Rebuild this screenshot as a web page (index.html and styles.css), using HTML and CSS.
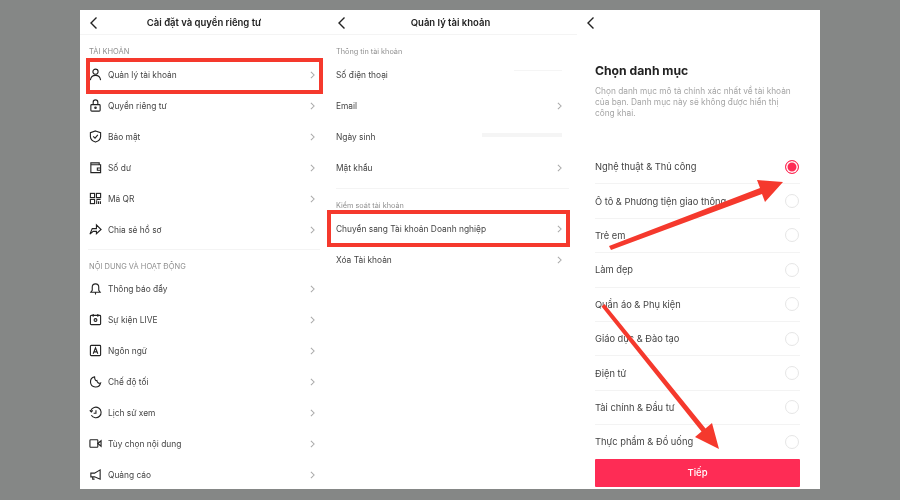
FILE: index.html
```html
<!DOCTYPE html>
<html lang="vi">
<head>
    <meta charset="UTF-8">
    <meta name="viewport" content="width=device-width, initial-scale=1.0">
    <title>Chọn danh mục</title>
    <link rel="stylesheet" href="styles.css">
</head>
<body>
    <svg width="0" height="0" class="defs">
        <symbol id="back" viewBox="0 0 10 14"><path d="M7.5 1.5 2 7l5.500 5.500" fill="none" stroke="#222" stroke-width="1.400"/></symbol>
        <symbol id="next" viewBox="0 0 6 10"><path d="M1 1l4 4-4 4" fill="none" stroke="#aaa" stroke-width="1.300"/></symbol>
    </svg>

    <div class="sheet">
        <div class="column first">
            <div class="top-bar">
                <svg class="back"><use href="#back"/></svg>
                <h1>Cài đặt và quyền riêng tư</h1>
            </div>
            <p class="section-label caps">TÀI KHOẢN</p>
            <div class="row">
                <svg class="icon" viewBox="0 0 14 14"><circle cx="7" cy="4" r="2.800"/><path d="M1.500 13c.5-3.500 2.500-5 5.500-5s5 1.500 5.500 5"/></svg>
                <span>Quản lý tài khoản</span>
                <svg class="chevron"><use href="#next"/></svg>
            </div>
            <div class="row">
                <svg class="icon" viewBox="0 0 14 14"><rect x="2" y="6" width="10" height="7" rx="1"/><path d="M4.500 6V3.500a2.500 2.500 0 0 1 5 0V6"/><circle cx="7" cy="9.500" r=".8"/></svg>
                <span>Quyền riêng tư</span>
                <svg class="chevron"><use href="#next"/></svg>
            </div>
            <div class="row">
                <svg class="icon" viewBox="0 0 14 14"><path d="M7 1l5.500 1.800V7c0 3-2.500 5-5.500 6C4 12 1.500 10 1.500 7V2.800z"/><path d="M4.500 6.800 6.500 8.800 9.500 5.300"/></svg>
                <span>Bảo mật</span>
                <svg class="chevron"><use href="#next"/></svg>
            </div>
            <div class="row">
                <svg class="icon" viewBox="0 0 14 14"><path d="M11 4V2H2v10.500h10.500V4H2"/><path d="M12.500 7.500H9v2.500h3.500"/></svg>
                <span>Số dư</span>
                <svg class="chevron"><use href="#next"/></svg>
            </div>
            <div class="row">
                <svg class="icon" viewBox="0 0 14 14"><rect x="1.500" y="1.500" width="4.500" height="4.500"/><rect x="8" y="1.500" width="4.500" height="4.500"/><rect x="1.500" y="8" width="4.500" height="4.500"/><path d="M8 8h4.500M8.300 9v4M10.300 10v3M12.300 10v3"/></svg>
                <span>Mã QR</span>
                <svg class="chevron"><use href="#next"/></svg>
            </div>
            <div class="row">
                <svg class="icon" viewBox="0 0 14 14"><path d="M8 2l5 5-5 4.500V9H4.500L1 12 3.500 6H8z"/></svg>
                <span>Chia sẻ hồ sơ</span>
                <svg class="chevron"><use href="#next"/></svg>
            </div>
            <hr class="rule">
            <p class="section-label caps">NỘI DUNG VÀ HOẠT ĐỘNG</p>
            <div class="row">
                <svg class="icon" viewBox="0 0 14 14"><path d="M2 11h10l-1.500-2V5.500a3.500 3.500 0 0 0-7 0V9z"/><path d="M7 11v2.500"/></svg>
                <span>Thông báo đẩy</span>
                <svg class="chevron"><use href="#next"/></svg>
            </div>
            <div class="row">
                <svg class="icon" viewBox="0 0 14 14"><rect x="1.500" y="2.500" width="11" height="10" rx="1"/><path d="M4.500 1v3M9.500 1v3"/><circle cx="7" cy="7.500" r="1.500"/></svg>
                <span>Sự kiện LIVE</span>
                <svg class="chevron"><use href="#next"/></svg>
            </div>
            <div class="row">
                <svg class="icon" viewBox="0 0 14 14"><rect x="1.500" y="1.500" width="11" height="11" rx="1"/><path d="M4.500 10.500 7 4l2.500 6.500M5.300 8.500h3.400"/></svg>
                <span>Ngôn ngữ</span>
                <svg class="chevron"><use href="#next"/></svg>
            </div>
            <div class="row">
                <svg class="icon" viewBox="0 0 14 14"><path d="M6 2a5.500 5.500 0 1 0 6.500 6.500C10 9.500 9 8 8.500 6 7 6.500 6 4.500 6 2z"/></svg>
                <span>Chế độ tối</span>
                <svg class="chevron"><use href="#next"/></svg>
            </div>
            <div class="row">
                <svg class="icon" viewBox="0 0 14 14"><path d="M2.500 10A5.700 5.700 0 1 0 2 5M.8 4.800 2.500 6.300 4 4.600"/><path d="M7.500 4.500V7.800H5"/></svg>
                <span>Lịch sử xem</span>
                <svg class="chevron"><use href="#next"/></svg>
            </div>
            <div class="row">
                <svg class="icon" viewBox="0 0 14 14"><rect x="1" y="3" width="8.500" height="8" rx=".8"/><path d="M9.500 7l3.500-3v6z"/></svg>
                <span>Tùy chọn nội dung</span>
                <svg class="chevron"><use href="#next"/></svg>
            </div>
            <div class="row">
                <svg class="icon" viewBox="0 0 14 14"><path d="M12 2v10L6 9.500H2v-4h4zM4 9.500V12h2"/></svg>
                <span>Quảng cáo</span>
                <svg class="chevron"><use href="#next"/></svg>
            </div>
        </div>

        <div class="column second">
            <div class="top-bar">
                <svg class="back"><use href="#back"/></svg>
                <h1>Quản lý tài khoản</h1>
            </div>
            <p class="section-label">Thông tin tài khoản</p>
            <div class="row"><span>Số điện thoại</span><i class="smudge short"></i></div>
            <div class="row"><span>Email</span><svg class="chevron"><use href="#next"/></svg></div>
            <div class="row"><span>Ngày sinh</span><i class="smudge long"></i></div>
            <div class="row"><span>Mật khẩu</span><svg class="chevron"><use href="#next"/></svg></div>
            <hr class="rule">
            <p class="section-label">Kiểm soát tài khoản</p>
            <div class="row"><span>Chuyển sang Tài khoản Doanh nghiệp</span><svg class="chevron"><use href="#next"/></svg></div>
            <div class="row"><span>Xóa Tài khoản</span><svg class="chevron"><use href="#next"/></svg></div>
        </div>

        <div class="column third">
            <div class="top-bar plain">
                <svg class="back"><use href="#back"/></svg>
            </div>
            <div class="intro">
                <h2>Chọn danh mục</h2>
                <p>Chọn danh mục mô tả chính xác nhất về tài khoản của bạn. Danh mục này sẽ không được hiển thị công khai.</p>
            </div>
            <ul class="choices">
                <li><span>Nghệ thuật &amp; Thủ công</span><i class="radio on"></i></li>
                <li><span>Ô tô &amp; Phương tiện giao thông</span><i class="radio"></i></li>
                <li><span>Trẻ em</span><i class="radio"></i></li>
                <li><span>Làm đẹp</span><i class="radio"></i></li>
                <li><span>Quần áo &amp; Phụ kiện</span><i class="radio"></i></li>
                <li><span>Giáo dục &amp; Đào tạo</span><i class="radio"></i></li>
                <li><span>Điện tử</span><i class="radio"></i></li>
                <li><span>Tài chính &amp; Đầu tư</span><i class="radio"></i></li>
                <li><span>Thực phẩm &amp; Đồ uống</span><i class="radio"></i></li>
            </ul>
            <button class="next-button" type="button">Tiếp</button>
        </div>

        <!-- red marks drawn over the screenshots -->
        <div class="mark mark-account"></div>
        <div class="mark mark-business"></div>
        <svg class="arrows" viewBox="0 0 740 479">
            <polygon points="529,236 531,240 682,184 685,192 703,172 677,170 680,178"/>
            <polygon points="521.500,296.500 524.500,294 625.500,418.400 632,413 639,439 615,427 621.500,421.600"/>
        </svg>
    </div>
</body>
</html>
```

FILE: styles.css
```css
body {
    margin: 0;
    height: 500px;
    overflow: hidden;
    background-color: #858786;
    font-family: "Inter", "Liberation Sans", sans-serif;
    color: #333;
}

.defs {
    display: block;
    height: 0;
}

.sheet {
    position: relative;
    display: flex;
    width: 740px;
    height: 479px;
    margin: 10px 0 0 80px;
    overflow: hidden;
    background-color: #fff;
    filter: blur(0.4px);
}

.column {
    flex: none;
}

.first {
    width: 248px;
}

.second {
    width: 249px;
}

.third {
    width: 243px;
}

.top-bar {
    position: relative;
    height: 25px;
    border-bottom: 1px solid #f4f4f4;
    box-sizing: border-box;
}

.top-bar.plain {
    border-bottom: none;
}

.top-bar h1 {
    margin: 0;
    padding-top: 6px;
    font-size: 9.500px;
    line-height: 13px;
    font-weight: 600;
    text-align: center;
    color: #222;
}

.second .top-bar h1 {
    padding-right: 4px;
}

.back {
    position: absolute;
    left: 9px;
    top: 6px;
    width: 10px;
    height: 14px;
}

.section-label {
    margin: 0;
    height: 24px;
    padding: 12px 0 0 9px;
    box-sizing: border-box;
    font-size: 7.500px;
    line-height: 10px;
    color: #8f8f8f;
}

.second .section-label {
    padding-left: 8px;
    font-size: 7.300px;
}

.first .rule + .section-label {
    height: 23px;
}

.row {
    display: flex;
    align-items: center;
    height: 31px;
    padding: 0 13px 0 9px;
    font-size: 8.400px;
    color: #444;
}

.second .row {
    padding: 0 15px 0 8px;
}

.icon {
    flex: none;
    width: 13px;
    height: 13px;
    margin-right: 6px;
    fill: none;
    stroke: #222;
    stroke-width: 1.200;
}

.chevron {
    flex: none;
    width: 5px;
    height: 8px;
    margin-left: auto;
}

.smudge {
    margin-left: auto;
    background-color: #f5f5f5;
}

.smudge.short {
    width: 48px;
    height: 1px;
    margin-top: -8px;
}

.smudge.long {
    width: 80px;
    height: 4px;
    margin-top: -4px;
}

.rule {
    height: 1px;
    margin: 5px 8px 0;
    border: none;
    background-color: #f4f4f4;
}

.first .rule {
    margin-top: 4px;
}

.intro {
    padding: 27px 20px 0 18px;
    height: 89px;
    box-sizing: border-box;
}

.intro h2 {
    margin: 0 0 6px;
    font-size: 12.200px;
    line-height: 18px;
    font-weight: 700;
    color: #222;
}

.intro p {
    margin: 0;
    font-size: 8.300px;
    line-height: 11px;
    color: #a5a5a5;
}

.choices {
    margin: 26px 20px 0 18px;
    padding: 0;
    list-style: none;
}

.choices li {
    display: flex;
    align-items: center;
    justify-content: space-between;
    height: 34.400px;
    box-sizing: border-box;
    border-bottom: 1px solid #f3f3f3;
    font-size: 9.300px;
    color: #444;
}

.choices li:last-child {
    height: 33.400px;
    border-bottom: none;
}

.radio {
    width: 14px;
    height: 14px;
    margin-right: 1px;
    box-sizing: border-box;
    border: 1px solid #e6e6e6;
    border-radius: 50%;
}

.radio.on {
    border: 1px solid #fe2c55;
    background-color: #fe2c55;
    box-shadow: inset 0 0 0 1.500px #fff;
}

.next-button {
    display: block;
    width: 205px;
    height: 28px;
    margin-left: 18px;
    padding: 0;
    border: none;
    border-radius: 1px;
    background-color: #fe2c55;
    color: #fff;
    font-family: inherit;
    font-size: 9.500px;
    font-weight: 500;
}

.mark {
    position: absolute;
    box-sizing: border-box;
    border: 4px solid #f5392d;
}

.mark-account {
    left: 6px;
    top: 48px;
    width: 237px;
    height: 36px;
}

.mark-business {
    left: 247px;
    top: 200px;
    width: 243px;
    height: 37px;
}

.arrows {
    position: absolute;
    left: 0;
    top: 0;
    width: 740px;
    height: 479px;
    fill: #f5392d;
}
```
